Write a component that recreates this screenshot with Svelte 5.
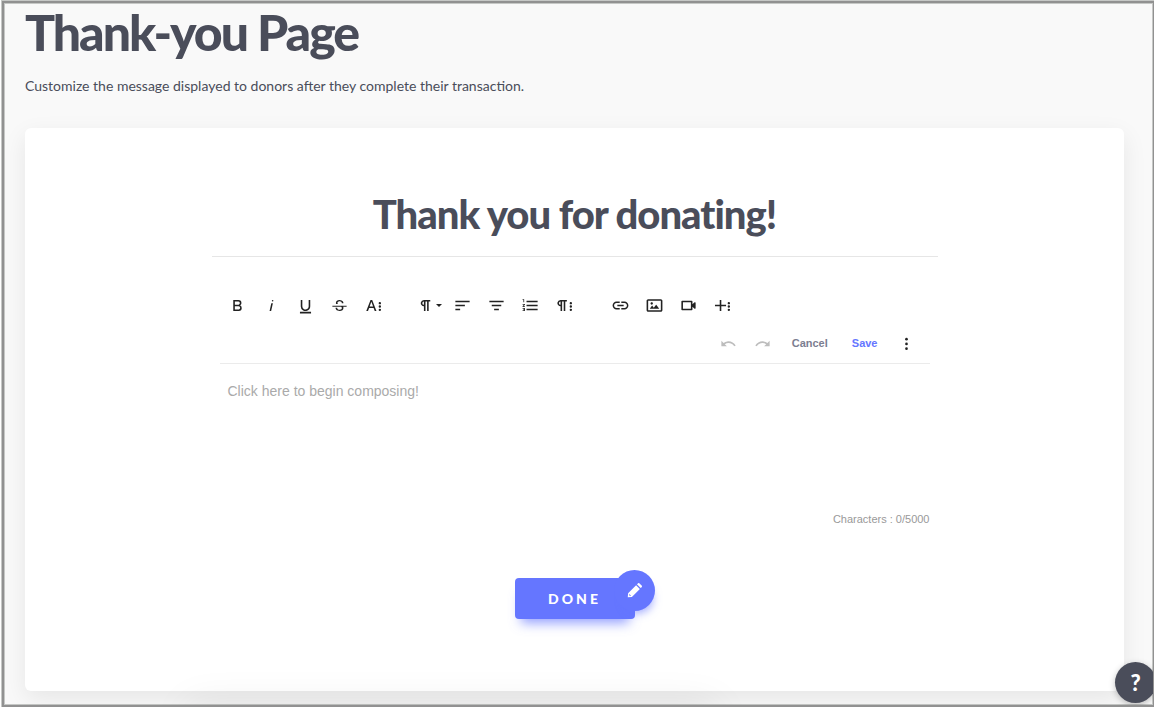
<script>
  const dots = 'M21.5,17.5A1.5,1.5,0,1,1,20,16,1.5,1.5,0,0,1,21.5,17.5Zm0-4.25A1.5,1.5,0,1,1,20,11.75,1.5,1.5,0,0,1,21.5,13.25Zm0-4.25A1.5,1.5,0,1,1,20,7.5,1.5,1.5,0,0,1,21.5,9Z';
  const pilcrow = 'M10.15,5A4.11,4.11,0,0,0,6.08,8.18,4,4,0,0,0,10,13v6h2V7h2V19h2V7h2V5ZM8,9a2,2,0,0,1,2-2v4A2,2,0,0,1,8,9Z';

  const groups = [
    [
      { label: 'Bold', d: 'M15.25,11.8h0A3.68,3.68,0,0,0,17,9a3.93,3.93,0,0,0-3.86-4H6.65V19h7a3.74,3.74,0,0,0,3.7-3.78V15.1A3.64,3.64,0,0,0,15.25,11.8ZM8.65,7h4.2a2.09,2.09,0,0,1,2,1.3,2.09,2.09,0,0,1-1.37,2.61,2.23,2.23,0,0,1-.63.09H8.65Zm4.6,10H8.65V13h4.6a2.09,2.09,0,0,1,2,1.3,2.09,2.09,0,0,1-1.37,2.61A2.23,2.23,0,0,1,13.25,17Z' },
      { label: 'Italic', d: 'M11.76,9h2l-2.2,10h-2Zm1.68-4a1,1,0,1,0,1,1,1,1,0,0,0-1-1Z' },
      { label: 'Underline', d: 'M19,20v2H5V20Zm-3-6.785a4,4,0,0,1-5.74,3.4A3.75,3.75,0,0,1,8,13.085V5.005H6v8.21a6,6,0,0,0,8,5.44,5.851,5.851,0,0,0,4-5.65v-8H16Z' },
      { label: 'Strikethrough', d: 'M3,12.20294H21v1.5H16.63422a3.59782,3.59782,0,0,1,.34942,1.5929,3.252,3.252,0,0,1-1.31427,2.6997A5.55082,5.55082,0,0,1,12.20251,19a6.4421,6.4421,0,0,1-2.62335-.539,4.46335,4.46335,0,0,1-1.89264-1.48816,3.668,3.668,0,0,1-.67016-2.15546V14.704h.28723v-.0011h.34149v.0011H9.02v.11334a2.18275,2.18275,0,0,0,.85413,1.83069,3.69,3.69,0,0,0,2.32836.67926,3.38778,3.38778,0,0,0,2.07666-.5462,1.73346,1.73346,0,0,0,.7013-1.46655,1.69749,1.69749,0,0,0-.647-1.43439,3.00525,3.00525,0,0,0-.27491-.17725H3ZM16.34473,7.05981A4.18163,4.18163,0,0,0,14.6236,5.5462,5.627,5.627,0,0,0,12.11072,5,5.16083,5.16083,0,0,0,8.74719,6.06213,3.36315,3.36315,0,0,0,7.44006,8.76855a3.22923,3.22923,0,0,0,.3216,1.42786h2.59668c-.08338-.05365-.18537-.10577-.25269-.16064a1.60652,1.60652,0,0,1-.65283-1.30036,1.79843,1.79843,0,0,1,.68842-1.5108,3.12971,3.12971,0,0,1,1.96948-.55243,3.04779,3.04779,0,0,1,2.106.6687,2.35066,2.35066,0,0,1,.736,1.83258v.11341h2.00317V9.17346A3.90013,3.90013,0,0,0,16.34473,7.05981Z' },
      { label: 'More text', d: 'M13.55,19h2.2L10.35,5h-2.1L2.85,19h2.2l1.4-3.8h5.7ZM7.1,13.3,9.3,7.3l2.2,6Z' + dots }
    ],
    [
      { label: 'Paragraph format', d: pilcrow, caret: true },
      { label: 'Align left', d: 'M3,18h6V16H3ZM3,6V8H21V6Zm0,7H15V11H3Z' },
      { label: 'Align center', d: 'M9,18h6V16H9ZM3,6V8H21V6Zm3,7H18V11H6Z' },
      { label: 'Ordered list', d: 'M2,16h2v.5H3v1h1V18H2v1h3v-4H2Zm1-8h1V4H2v1h1Zm-1,3h1.8L2,13.1V14h3v-1H3.2L5,10.9V10H2Zm5-5v2h14V6Zm0,12h14v-2H7Zm0-5h14v-2H7Z' },
      { label: 'More paragraph', d: 'M7.15,5A4.11,4.11,0,0,0,3.08,8.18,4,4,0,0,0,7,13v6h2V7h2V19h2V7h2V5ZM5,9a2,2,0,0,1,2-2v4A2,2,0,0,1,5,9Z' + dots }
    ],
    [
      { label: 'Insert link', d: 'M3.9 12c0-1.71 1.39-3.1 3.1-3.1h4V7H7c-2.76 0-5 2.24-5 5s2.24 5 5 5h4v-1.9H7c-1.71 0-3.1-1.39-3.1-3.1zM8 13h8v-2H8v2zm9-6h-4v1.9h4c1.71 0 3.1 1.39 3.1 3.1s-1.39 3.1-3.1 3.1h-4V17h4c2.76 0 5-2.24 5-5s-2.24-5-5-5z' },
      { label: 'Insert image', d: 'M14.2,11l3.8,5H6l3-3.9l2.1,2.7L14,11H14.2z M8.5,11c0.8,0,1.5-0.7,1.5-1.5S9.3,8,8.5,8S7,8.7,7,9.5C7,10.3,7.7,11,8.5,11z M22,6v12c0,1.1-0.9,2-2,2H4c-1.1,0-2-0.9-2-2V6c0-1.1,0.9-2,2-2h16C21.1,4,22,4.9,22,6z M20,8.8V6H4v12h16V8.8z' },
      { label: 'Insert video', d: 'M15,8v8H5V8H15m2,2.5V7a1,1,0,0,0-1-1H4A1,1,0,0,0,3,7V17a1,1,0,0,0,1,1H16a1,1,0,0,0,1-1V13.5l2.29,2.29A1,1,0,0,0,21,15.08V8.91a1,1,0,0,0-1.71-.71Z' },
      { label: 'More rich', d: 'M16.5,13h-6v6h-2V13h-6V11h6V5h2v6h6Z' + dots }
    ]
  ];

  const undo = 'M10.4,9.4c-1.7,0.3-3.2,0.9-4.6,2L3,8.5v7h7l-2.7-2.7c3.7-2.6,8.8-1.8,11.5,1.9c0.2,0.3,0.4,0.5,0.5,0.8l1.8-0.9C18.9,10.8,14.7,8.7,10.4,9.4z';
  const limit = 5000;
  let message = $state('');
</script>

<div class="frame">
  <main>
    <h1>Thank-you Page</h1>
    <p class="intro">Customize the message displayed to donors after they complete their transaction.</p>

    <section class="card">
      <div class="column">
        <h2>Thank you for donating!</h2>
        <div class="editor">
          <div class="toolbar">
            {#each groups as group}
              <div class="group">
                {#each group as tool}
                  <button class="tool" class:wide={tool.caret} type="button" aria-label={tool.label}>
                    <svg class="icon" viewBox="0 0 24 24" aria-hidden="true"><path d={tool.d} /></svg>
                    {#if tool.caret}<span class="caret"></span>{/if}
                  </button>
                {/each}
              </div>
            {/each}
          </div>
          <div class="actions">
            <button class="tool" type="button" aria-label="Undo" disabled>
              <svg class="icon" viewBox="0 0 24 24" aria-hidden="true"><path d={undo} /></svg>
            </button>
            <button class="tool" type="button" aria-label="Redo" disabled>
              <svg class="icon" viewBox="0 0 24 24" aria-hidden="true"><path transform="matrix(-1 0 0 1 24 0)" d={undo} /></svg>
            </button>
            <button class="text" type="button">Cancel</button>
            <button class="text save" type="button">Save</button>
            <button class="tool" type="button" aria-label="More options">
              <svg class="icon" viewBox="0 0 24 24" aria-hidden="true">
                <circle cx="12" cy="6.5" r="1.7" /><circle cx="12" cy="12.5" r="1.7" /><circle cx="12" cy="18.5" r="1.7" />
              </svg>
            </button>
          </div>
          <textarea aria-label="Message" placeholder="Click here to begin composing!" maxlength={limit} bind:value={message}></textarea>
          <p class="counter">Characters : {message.length}/{limit}</p>
        </div>
      </div>
      <div class="done-wrap">
        <button class="done" type="button">DONE</button>
        <button class="edit" type="button" aria-label="Edit button">
          <svg viewBox="0 0 16 16" aria-hidden="true">
            <path d="M9.7 2.3 13.7 6.3 5.2 14.8 .8 15.2 1.2 10.8ZM10.6 1.4 11.6.4a1.3 1.3 0 0 1 1.8 0l2.2 2.2a1.3 1.3 0 0 1 0 1.8L14.6 5.4Z" />
            <path class="cut" d="M2.5 11.7 4.3 13.5 3.1 13.8 2.2 12.9Z" />
          </svg>
        </button>
      </div>
    </section>
  </main>
  <button class="help" type="button" aria-label="Help">?</button>
</div>

<style>
  :global(body) { background: #fff; }

  .frame {
    position: relative;
    box-sizing: border-box;
    min-height: calc(100vh - 3px);
    margin: 1px 0 0 2px;
    border: 2px solid #919191;
    border-right-width: 1px;
    box-shadow: 0 0 0 1px #c6c8c6, inset 0 0 0 1px #c6c8c6;
    overflow: hidden;
    background: #f9f9f9;
    color: #4a4d5a;
    font-family: Lato, sans-serif;
  }
  .frame::after {
    content: '';
    position: absolute;
    top: 100%;
    left: 16%;
    width: 46%;
    height: 40px;
    box-shadow: 0 0 40px rgba(0, 0, 0, 0.08);
    pointer-events: none;
  }
  main { padding: 0 29px 13px 21px; }
  h1, h2, p { margin: 0; }
  h1 {
    font-size: 50px;
    line-height: 58px;
    font-weight: 900;
    letter-spacing: -2px;
  }
  .intro {
    margin-top: 14px;
    font-size: 14px;
    line-height: 22px;
  }
  .card {
    margin-top: 31px;
    padding: 58px 24px 72px;
    border-radius: 6px;
    background: #fff;
    box-shadow: 0 8px 24px rgba(0, 0, 0, 0.08);
  }
  .column { max-width: 726px; margin: 0 auto; }
  h2 {
    padding-bottom: 14px;
    border-bottom: 1px solid #e6e6e6;
    font-size: 40px;
    line-height: 56px;
    font-weight: 900;
    letter-spacing: -1px;
    text-align: center;
  }
  .editor {
    margin: 29px 8px 0;
    font-family: "Liberation Sans", Arial, sans-serif;
  }
  button {
    padding: 0;
    border: 0;
    background: none;
    font-family: inherit;
    cursor: pointer;
  }
  .toolbar { display: flex; flex-wrap: wrap; gap: 22px; padding-left: 1px; }
  .group { display: flex; }
  .tool {
    display: flex;
    align-items: center;
    justify-content: center;
    width: 34px;
    height: 38px;
    color: #222;
  }
  .tool.wide { width: 33px; gap: 1px; }
  .tool:disabled { color: #bdbdbd; }
  .icon { flex: none; width: 19px; height: 19px; fill: currentColor; }
  .caret {
    border: 3px solid transparent;
    border-top-color: currentColor;
    border-bottom: 0;
  }
  .actions {
    display: flex;
    justify-content: flex-end;
    padding: 0 6px 1px 0;
    border-bottom: 1px solid #ebebeb;
  }
  .text {
    padding: 0 12px;
    color: #7c7e90;
    font-size: 11px;
    font-weight: 700;
  }
  .save { color: #6576ff; }
  textarea {
    display: block;
    box-sizing: border-box;
    width: 100%;
    height: 146px;
    padding: 17px 8px;
    border: 0;
    outline: 0;
    resize: none;
    background: transparent;
    color: #4a4d5a;
    font: 14px/20px "Liberation Sans", Arial, sans-serif;
  }
  textarea::placeholder { color: #aaa; opacity: 1; }
  .counter {
    color: #999;
    font-size: 11px;
    line-height: 18px;
    text-align: right;
  }
  .done-wrap {
    position: relative;
    width: max-content;
    margin: 50px auto 0;
  }
  .done {
    display: block;
    min-width: 120px;
    height: 41px;
    border-radius: 4px;
    background: #6576ff;
    box-shadow: 0 10px 12px -6px rgba(101, 118, 255, 0.7);
    color: #fff;
    font-size: 14px;
    font-weight: 900;
    letter-spacing: 3px;
  }
  .edit {
    position: absolute;
    top: -8px;
    right: -20px;
    display: grid;
    place-items: center;
    width: 41px;
    height: 41px;
    border-radius: 50%;
    background: #6576ff;
    box-shadow: 4px 8px 8px -6px rgba(101, 118, 255, 0.6);
  }
  .edit svg { width: 15px; height: 15px; fill: #fff; }
  .edit .cut { fill: #6576ff; }
  .help {
    position: absolute;
    right: -3px;
    bottom: 2px;
    z-index: 1;
    width: 41px;
    height: 41px;
    border-radius: 50%;
    background: #4a4d5a;
    box-shadow: 0 2px 6px rgba(0, 0, 0, 0.25);
    color: #fff;
    font-size: 22px;
    font-weight: 900;
  }
</style>
